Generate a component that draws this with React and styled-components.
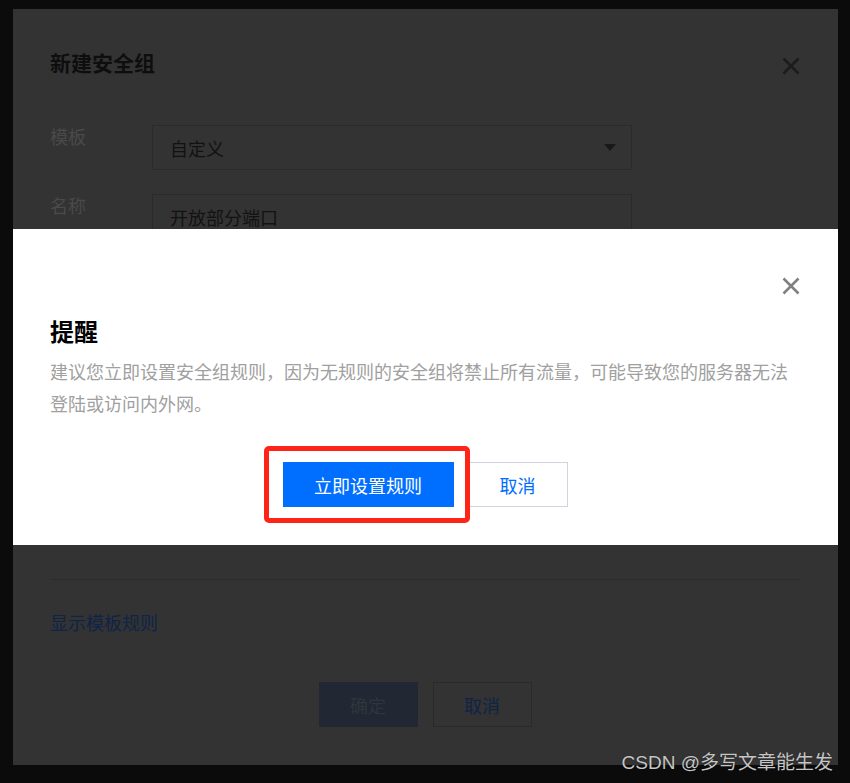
import React from 'react'
import styled, { createGlobalStyle } from 'styled-components'

const GlobalStyle = createGlobalStyle`
  html, body {
    margin: 0;
    background: #0b0b0b;
  }
  body {
    font-family: "Noto Sans CJK SC", "Noto Sans", sans-serif;
  }
  * {
    box-sizing: border-box;
  }
`

const Page = styled.div`
  position: relative;
  width: 850px;
  height: 783px;
  padding: 9px 12px 0 13px;
  overflow: hidden;
`

const Dialog = styled.div`
  position: relative;
  height: 756px;
  background: #333333;
  display: flex;
  flex-direction: column;
  padding: 0 38px 0 37px;
`

const Header = styled.div`
  display: flex;
  justify-content: space-between;
  align-items: flex-start;
  padding-top: 39px;
`

const DimTitle = styled.h2`
  margin: 0;
  font-size: 21px;
  line-height: 28px;
  font-weight: 700;
  color: #0e0e0e;
`

const CloseButton = styled.button`
  width: 18px;
  height: 18px;
  padding: 0;
  margin-top: ${(p) => p.$offset || 0}px;
  border: none;
  background: none;
  color: ${(p) => p.$color};
  display: block;
  align-self: ${(p) => (p.$end ? 'flex-end' : 'auto')};

  svg {
    display: block;
  }
`

const Form = styled.div`
  margin-top: 49px;
  height: 454px;
  display: flex;
  flex-direction: column;
  gap: 24px;
`

const Row = styled.div`
  display: flex;
`

const Label = styled.div`
  width: 102px;
  font-size: 18px;
  line-height: 22px;
  color: #4a4a4a;
`

const Field = styled.div`
  width: 480px;
  height: 45px;
  border: 1px solid #2b2b2b;
  display: flex;
  align-items: center;
  justify-content: space-between;
  padding: 0 15px 0 17px;
  font-size: 18px;
  color: #121212;
`

const Arrow = styled.span`
  width: 0;
  height: 0;
  border-left: 6px solid transparent;
  border-right: 6px solid transparent;
  border-top: 7px solid #181818;
`

const Divider = styled.div`
  height: 1px;
  background: #2c2c2c;
`

const DimLink = styled.a`
  margin-top: 29px;
  font-size: 18px;
  line-height: 26px;
  color: #0f2447;
  text-decoration: none;
`

const Footer = styled.div`
  margin-top: ${(p) => p.$gapTop}px;
  display: flex;
  justify-content: center;
  gap: ${(p) => p.$gap || 0}px;
`

const DimButton = styled.button`
  width: 99px;
  height: 45px;
  font-family: inherit;
  font-size: 18px;
  border: 1px solid ${(p) => (p.$primary ? '#212833' : '#2a2a2a')};
  background: ${(p) => (p.$primary ? '#212833' : 'transparent')};
  color: ${(p) => (p.$primary ? '#30353d' : '#0f2447')};
  padding: 0;
`

const Modal = styled.div`
  position: absolute;
  top: 220px;
  left: 0;
  right: 0;
  height: 316px;
  background: #ffffff;
  display: flex;
  flex-direction: column;
  padding: 0 38px 0 37px;
`

const ModalTitle = styled.h3`
  margin: 21px 0 0;
  font-size: 24px;
  line-height: 30px;
  font-weight: 700;
  color: #000;
`

const Message = styled.p`
  margin: 9px 0 0;
  max-width: 745px;
  font-size: 18px;
  line-height: 32px;
  color: #a0a0a0;
`

const Highlight = styled.div`
  position: relative;

  &::after {
    content: '';
    position: absolute;
    top: -16px;
    left: -19px;
    right: -16px;
    bottom: -16px;
    border: 5px solid #ff2418;
    border-radius: 5px;
    pointer-events: none;
    z-index: 2;
  }
`

const Button = styled.button`
  width: ${(p) => (p.$primary ? 171 : 100)}px;
  height: 45px;
  padding: 0;
  font-family: inherit;
  font-size: 18px;
  border: 1px solid ${(p) => (p.$primary ? '#006eff' : '#cfd5de')};
  background: ${(p) => (p.$primary ? '#006eff' : '#ffffff')};
  color: ${(p) => (p.$primary ? '#ffffff' : '#006eff')};
  display: block;
`

const Watermark = styled.div`
  position: absolute;
  right: 17px;
  bottom: 7px;
  font-family: "Liberation Sans", "Noto Sans CJK SC", sans-serif;
  font-size: 19px;
  line-height: 26px;
  color: #c6c6c6;
  text-shadow: 0 0 1px rgba(0, 0, 0, 0.6);
`

const CrossIcon = ({ width }) => (
  <svg width="18" height="18" viewBox="0 0 18 18">
    <path d="M1.5 1.5 L16.5 16.5 M16.5 1.5 L1.5 16.5" stroke="currentColor" strokeWidth={width} fill="none" />
  </svg>
)

const App = () => (
  <>
    <GlobalStyle />
    <Page>
      <Dialog>
        <Header>
          <DimTitle>新建安全组</DimTitle>
          <CloseButton $color="#1c1c1c" $offset={9}>
            <CrossIcon width={2.6} />
          </CloseButton>
        </Header>
        <Form>
          <Row>
            <Label>模板</Label>
            <Field>
              自定义
              <Arrow />
            </Field>
          </Row>
          <Row>
            <Label>名称</Label>
            <Field>开放部分端口</Field>
          </Row>
        </Form>
        <Divider />
        <DimLink>显示模板规则</DimLink>
        <Footer $gapTop={47} $gap={15}>
          <DimButton $primary>确定</DimButton>
          <DimButton>取消</DimButton>
        </Footer>

        <Modal>
          <CloseButton $color="#808080" $offset={48} $end>
            <CrossIcon width={2.6} />
          </CloseButton>
          <ModalTitle>提醒</ModalTitle>
          <Message>
            建议您立即设置安全组规则，因为无规则的安全组将禁止所有流量，可能导致您的服务器无法登陆或访问内外网。
          </Message>
          <Footer $gapTop={43} $gap={14}>
            <Highlight>
              <Button $primary>立即设置规则</Button>
            </Highlight>
            <Button>取消</Button>
          </Footer>
        </Modal>
      </Dialog>
      <Watermark>CSDN @多写文章能生发</Watermark>
    </Page>
  </>
)

export default App
